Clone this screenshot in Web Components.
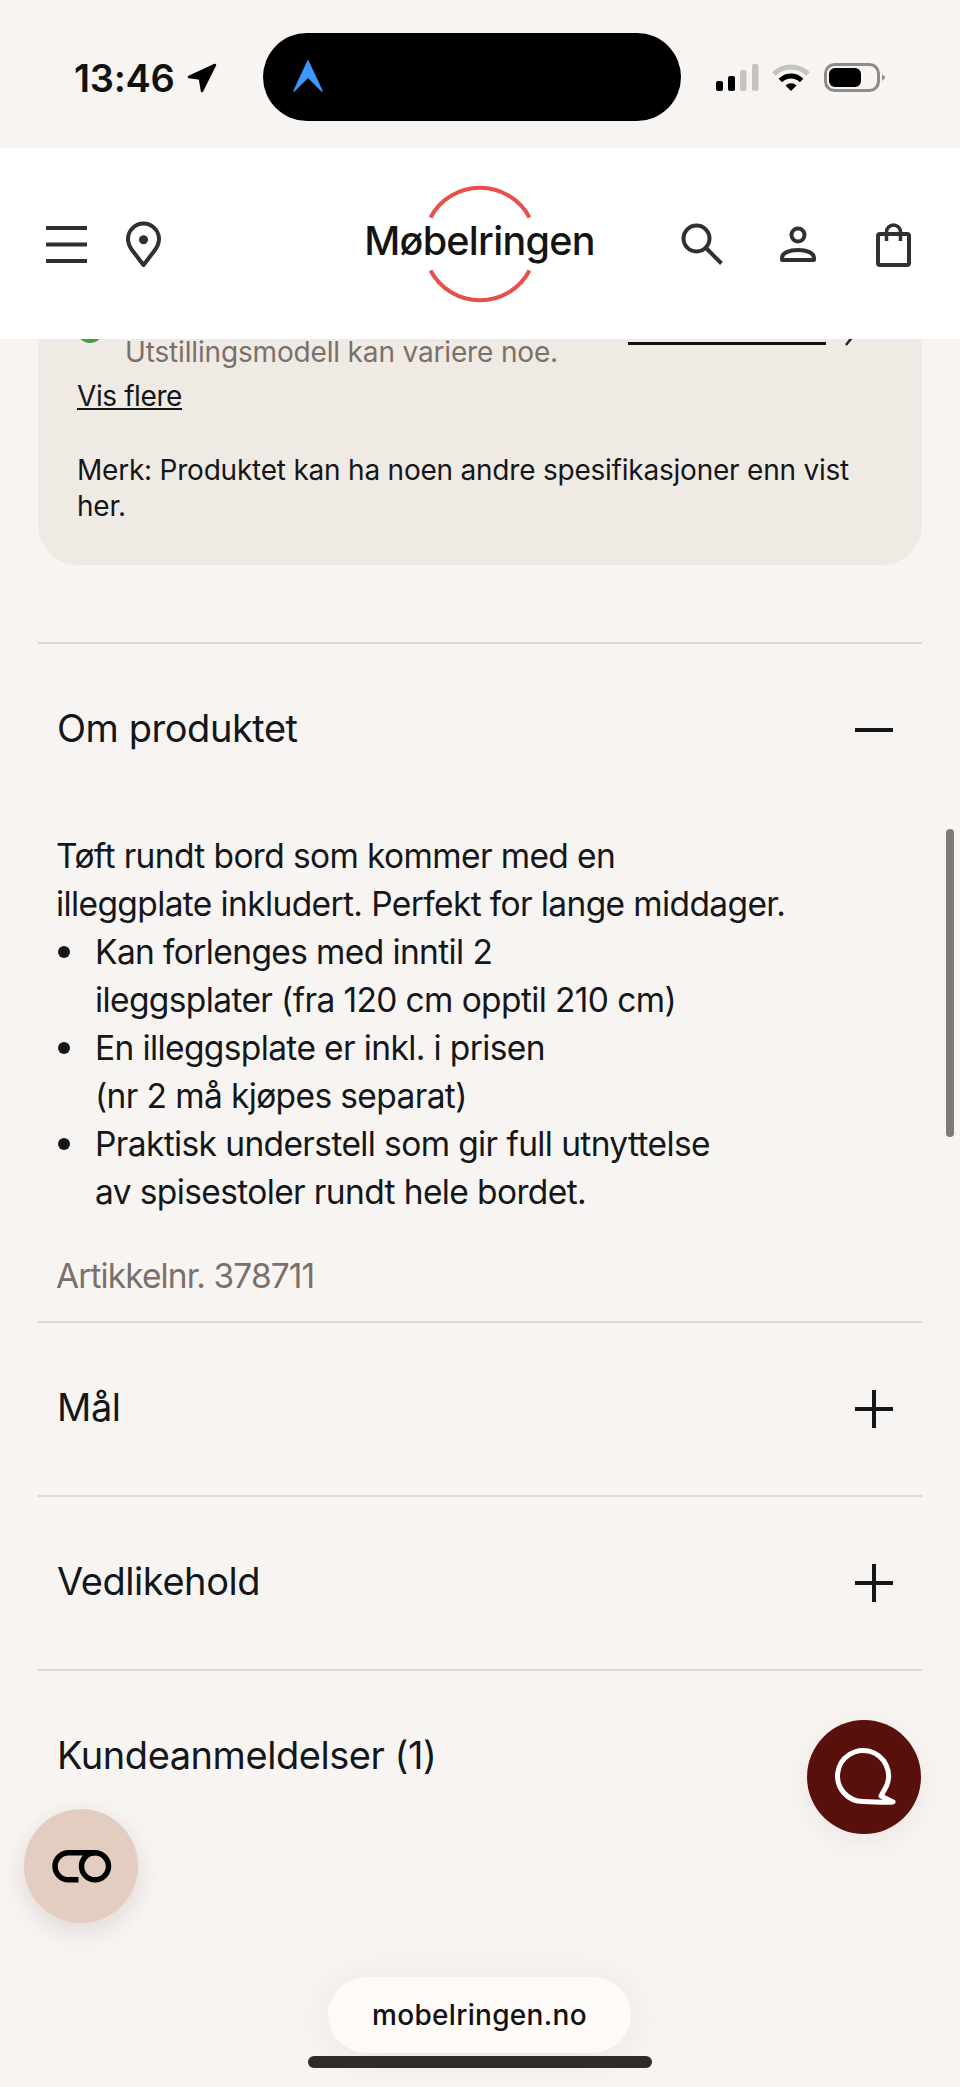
<!DOCTYPE html>
<html lang="no"><head><meta charset="utf-8"><title>Møbelringen</title>
<style>
html,body{margin:0;padding:0;background:#f8f4f2;}
body{width:960px;height:2087px;overflow:hidden;position:relative;font-family:Inter,"Liberation Sans",Arial,sans-serif;color:#14171a;}
page-main{margin-top:-39px}
</style></head><body>
<status-bar></status-bar>
<site-header></site-header>
<page-main>
  <stock-card></stock-card>
  <accordion-item label="Om produktet" open first>
    <product-text></product-text>
  </accordion-item>
  <accordion-item label="Mål"></accordion-item>
  <accordion-item label="Vedlikehold"></accordion-item>
  <accordion-item label="Kundeanmeldelser (1)" bare></accordion-item>
</page-main>
<page-scrollbar></page-scrollbar>
<float-button kind="chat"></float-button>
<float-button kind="toggle"></float-button>
<browser-bar></browser-bar>
<script>
function def(name, html, init){
  customElements.define(name, class extends HTMLElement{
    constructor(){super();this.attachShadow({mode:'open'}).innerHTML=html;}
    connectedCallback(){ if(init) init.call(this,this.shadowRoot); }
  });
}
def('status-bar',`<style>
:host{display:flex;height:148px;background:#f8f4f2;box-sizing:border-box;padding-left:74px;position:relative}
.left{display:flex;width:189px;align-items:flex-start}
.time{font:600 38px/1 Inter,"Liberation Sans",sans-serif;color:#111;margin-top:59px;letter-spacing:-.3px}
.arrow{margin:62px 0 0 12px}
.island{width:418px;height:88px;margin-top:33px;background:#000;border-radius:44px;display:flex;align-items:center;padding-left:30px;box-sizing:border-box}
.right{display:flex;align-items:flex-start;margin-top:62px;margin-left:35px}
svg{display:block;flex:none}
</style>
<div class="left"><span class="time">13:46</span>
<svg class="arrow" width="32" height="32" viewBox="0 0 32 32"><path d="M29 3 3 15 14 16.500 16 29Z" fill="#000" stroke="#000" stroke-width="2.500" stroke-linejoin="round"/></svg></div>
<div class="island"><svg width="30" height="34" viewBox="0 0 30 34"><path d="M15 1 29 31 15 17 1 31Z" fill="#3a9bfd" stroke="#3a9bfd" stroke-width="1.500" stroke-linejoin="round"/></svg></div>
<div class="right">
<svg width="44" height="30" viewBox="0 0 44 30"><rect x="0" y="19" width="7" height="10" rx="2" fill="#000"/><rect x="12" y="14" width="7" height="15" rx="2" fill="#000"/><rect x="24" y="8" width="6.500" height="21" rx="2" fill="#c6c4c1"/><rect x="36" y="2" width="6.500" height="27" rx="2" fill="#c6c4c1"/></svg>
<svg style="margin-left:12px" width="38" height="30" viewBox="0 0 38 30"><path d="M2 12A24 24 0 0 1 36 12" fill="none" stroke="#c6c4c1" stroke-width="5"/><path d="M8.400 18.400A15 15 0 0 1 29.600 18.400" fill="none" stroke="#000" stroke-width="5"/><path d="M19 29 13.500 23.500A7.800 7.800 0 0 1 24.500 23.500Z" fill="#000"/></svg>
<svg style="margin-left:14px" width="62" height="32" viewBox="0 0 62 32"><rect x="1.500" y="2.500" width="53" height="26" rx="9" fill="none" stroke="#8f8b89" stroke-width="3"/><rect x="5" y="6" width="32" height="19" rx="6" fill="#000"/><path d="M58 12 61.500 15.500 58 19Z" fill="#8f8b89"/></svg>
</div>`);
def('site-header',`<style>
:host{display:grid;grid-template-columns:1fr auto 1fr;align-items:center;height:191px;background:#fff;position:relative;z-index:2;padding:0 49px 0 46px;box-sizing:border-box;color:#322f2e}
.l,.r{display:flex;align-items:center}
.l{gap:39px}.r{justify-content:flex-end;gap:56px}
.r .bag{margin-left:4px}
svg{display:block;flex:none}
.logo{position:relative;width:228px;display:flex;justify-content:center;left:1px}
.logo span{font:500 39.500px/1 Inter,"Liberation Sans",sans-serif;color:#151313;letter-spacing:-.7px;position:relative;top:-2px;white-space:nowrap}
.logo svg{position:absolute;left:50%;top:50%;margin:-60px 0 0 -60px}
</style>
<div class="l">
<svg width="41" height="60" viewBox="0 0 41 60" stroke="currentColor" stroke-width="4"><path d="M0 14H41M0 30.500H41M0 47H41"/></svg>
<svg width="35" height="60" viewBox="0 0 35 60"><path d="M17.500 51 6 36C3.500 32.500 2 28.500 2 25A15.500 15.500 0 0 1 33 25C33 28.500 31.500 32.500 29 36Z" fill="none" stroke="currentColor" stroke-width="4" stroke-linejoin="round"/><circle cx="17.500" cy="25.700" r="4.500" fill="currentColor"/></svg>
</div>
<div class="logo"><svg width="120" height="120" viewBox="0 0 120 120" fill="none" stroke="#e8504c" stroke-width="4"><path d="M10.500 33.500A56 56 0 0 1 109.500 33.500M10.500 86.500A56 56 0 0 0 109.500 86.500"/></svg><span>Møbelringen</span></div>
<div class="r">
<svg width="44" height="60" viewBox="0 0 44 60" fill="none" stroke="currentColor" stroke-width="4"><circle cx="16.500" cy="24.500" r="13"/><path d="M26 34 41.500 49.500"/></svg>
<svg width="36" height="60" viewBox="0 0 36 60" fill="none" stroke="currentColor" stroke-width="4"><circle cx="18" cy="21" r="6.500"/><path d="M2 46V44C2 39 9 36 18 36S34 39 34 44V46Z" stroke-linejoin="round"/></svg>
<svg class="bag" width="35" height="60" viewBox="0 0 35 60" fill="none" stroke="currentColor" stroke-width="4"><rect x="2" y="20" width="31" height="31" rx="2"/><path d="M10.500 27V18a7 7 0 0 1 14 0V27" stroke-width="3.500"/></svg>
</div>`);
def('page-main',`<style>:host{display:block;margin:0 38px;position:relative;z-index:1}</style><slot></slot>`);
def('stock-card',`<style>
:host{display:block;background:#efeae3;border-radius:0 0 40px 40px;padding:17px 39px 41px;box-sizing:border-box;height:265px;font-size:28px;line-height:36px;margin-bottom:77px;letter-spacing:-.22px}
.row{display:flex}
.dot{width:26px;height:26px;border-radius:50%;background:#3fa33a;margin-right:22px;flex:none}
.txt{padding-top:17px;color:#7b706b;white-space:nowrap;flex:1;letter-spacing:-.16px}
.link{width:198px;height:25px;border-bottom:3px solid #111;flex:none;margin-right:19px}
.chev{flex:none;margin:3px 26px 0 0;overflow:visible}
a{color:inherit;display:block;margin-top:8px;white-space:nowrap;letter-spacing:-.4px}
p{margin:0;white-space:nowrap}
</style>
<div class="row"><span class="dot"></span><span class="txt">Utstillingsmodell kan variere noe.</span><span class="link"></span>
<svg class="chev" width="12" height="26" viewBox="0 0 12 26"><path d="M0 4 9 15 1 25" fill="none" stroke="#222" stroke-width="2.500"/></svg></div>
<a href="#">Vis flere</a>
<p style="margin-top:38px">Merk: Produktet kan ha noen andre spesifikasjoner enn vist<br>her.</p>`);
customElements.define('accordion-item', class extends HTMLElement{
  constructor(){super();const open=this.hasAttribute('open');const bare=this.hasAttribute('bare');
    this.attachShadow({mode:'open'}).innerHTML=`<style>
:host{display:block;border-top:2px solid #dcd8d5}
.head{display:flex;align-items:center;justify-content:space-between;height:172px;padding:0 29px 0 19px;font-size:38px;letter-spacing:-.45px;white-space:nowrap}
.head span{margin-bottom:5px}
.body{display:block}
svg{display:block}
</style><div class="head"><span>${this.getAttribute('label')}</span>${bare?'':`<svg width="38" height="38" viewBox="0 0 38 38" stroke="#14171a" stroke-width="4"><path d="M0 19H38${open?'':'M19 0V38'}"/></svg>`}</div>${open?'<div class="body"><slot></slot></div>':''}`;}
});
def('product-text',`<style>
:host{display:block;padding:16px 19px 21px;font-size:33.500px;line-height:48px;letter-spacing:-.62px;white-space:nowrap}
ul{margin:0;padding:0;list-style:none}
li{position:relative;padding-left:38px}
li::before{content:"";position:absolute;left:1px;top:18px;width:12px;height:12px;border-radius:50%;background:#14171a}
.art{color:#7b706b;margin-top:36px;letter-spacing:-.9px;margin-left:-1px}
</style>
<div style="margin-left:-1px">Tøft rundt bord som kommer med en<br>illeggplate inkludert. Perfekt for lange middager.</div>
<ul><li>Kan forlenges med inntil 2<br>ileggsplater (fra 120 cm opptil 210 cm)</li>
<li>En illeggsplate er inkl. i prisen<br>(nr 2 må kjøpes separat)</li>
<li>Praktisk understell som gir full utnyttelse<br>av spisestoler rundt hele bordet.</li></ul>
<div class="art">Artikkelnr. 378711</div>`);
def('page-scrollbar',`<style>:host{display:block;position:absolute;left:946px;top:829px;width:8px;height:308px;border-radius:4px;background:#7d7a79;z-index:3}</style>`);
customElements.define('float-button', class extends HTMLElement{
  constructor(){super();const chat=this.getAttribute('kind')==='chat';
    this.attachShadow({mode:'open'}).innerHTML=`<style>
:host{display:block;position:absolute;width:114px;height:114px;border-radius:50%;z-index:4;
${chat?'left:807px;top:1720px;background:#58100b;box-shadow:0 8px 30px rgba(60,40,30,.06)':'left:24px;top:1809px;background:#e3cdc1;box-shadow:0 8px 24px rgba(60,40,30,.13)'}}
svg{display:block}</style>
${chat?`<svg width="114" height="114" viewBox="0 0 114 114"><path d="M56 81.500A25.500 25.500 0 1 1 79.500 66L74 76 86 82C76 82.500 66 82 56 81.500Z" fill="none" stroke="#fff" stroke-width="5" stroke-linejoin="round"/></svg>`
:`<svg width="114" height="114" viewBox="0 0 114 114" fill="none" stroke="#000" stroke-width="5.500"><path d="M54.500 70.800H44.500A13.500 13.500 0 0 1 44.500 43.800H71"/><circle cx="71" cy="57.300" r="13.500"/></svg>`}`;}
});
def('browser-bar',`<style>
:host{display:block;position:absolute;left:0;top:1977px;width:960px;z-index:5}
.pill{width:303px;height:76px;margin-left:328px;border-radius:38px;background:#fdfaf8;box-shadow:0 4px 40px rgba(60,40,30,.07);display:flex;align-items:center;justify-content:center;font:500 28px/1 Inter,"Liberation Sans",sans-serif;letter-spacing:.3px;color:#111;white-space:nowrap}
.home{width:344px;height:12px;margin:3px 0 0 308px;border-radius:6px;background:#2e2c2b}
</style><div class="pill">mobelringen.no</div><div class="home"></div>`);
</script>
</body></html>
